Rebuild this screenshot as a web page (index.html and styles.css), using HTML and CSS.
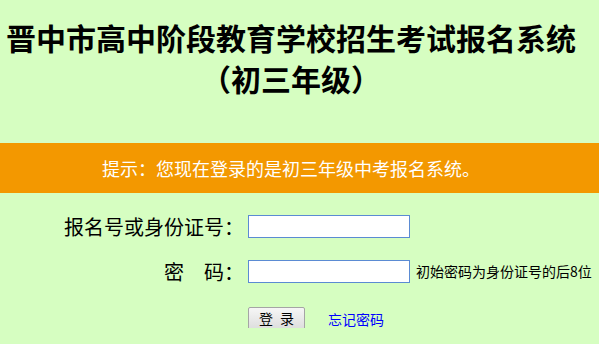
FILE: index.html
```html
<!DOCTYPE html>
<html lang="zh-CN">
<head>
<meta charset="utf-8">
<title>晋中市高中阶段教育学校招生考试报名系统</title>
<link rel="stylesheet" href="styles.css">
</head>
<body>
<div class="page">
  <h1 class="title">晋中市高中阶段教育学校招生考试报名系统<br>（初三年级）</h1>
  <div class="notice">提示：您现在登录的是初三年级中考报名系统。</div>
  <form class="login" onsubmit="return false">
    <label class="lbl" for="uid">报名号或身份证号：</label>
    <input class="field" id="uid" type="text">
    <span></span>
    <label class="lbl" for="pwd">密　码：</label>
    <input class="field" id="pwd" type="password">
    <span class="hint">初始密码为身份证号的后8位</span>
    <span></span>
    <div class="actions">
      <button class="btn" type="submit">登 录</button>
      <a class="forgot" href="#">忘记密码</a>
    </div>
  </form>
</div>
</body>
</html>
```

FILE: styles.css
```css
html, body {
  margin: 0;
  padding: 0;
  background: #d6fec1;
}
body {
  font-family: "Noto Sans CJK SC", "Noto Sans", sans-serif;
  color: #000;
}
.page {
  width: 582px;
}
.title {
  margin: 0;
  padding-top: 17px;
  font-size: 30px;
  line-height: 41px;
  font-weight: bold;
  text-align: center;
}
.notice {
  margin-top: 44px;
  width: 599px;
  height: 50px;
  background: #f39800;
  color: #fff;
  font-size: 18px;
  line-height: 50px;
  text-align: center;
  padding-right: 17px;
  box-sizing: border-box;
}
.login {
  display: grid;
  grid-template-columns: 180px 162px auto;
  grid-auto-rows: 23px;
  column-gap: 4px;
  row-gap: 22px;
  padding-left: 64px;
  margin-top: 22px;
  align-items: center;
}
.lbl {
  font-size: 20px;
  line-height: 23px;
  text-align: right;
  white-space: nowrap;
}
.field {
  box-sizing: border-box;
  width: 162px;
  height: 23px;
  margin: 0;
  border: 1px solid #5b8bd3;
  background: #fff;
  padding: 0 3px;
}
.hint {
  font-size: 14px;
  line-height: 23px;
  margin-left: 2px;
  white-space: nowrap;
}
.actions {
  display: flex;
  align-items: center;
  gap: 23px;
  margin-top: 4px;
  grid-column: 2 / 4;
}
.btn {
  box-sizing: border-box;
  width: 57px;
  height: 23px;
  margin: 0;
  padding: 0;
  border: 1px solid #a5a5a5;
  border-radius: 2px;
  background: linear-gradient(#f6f6f6, #dddddd);
  font-family: "Noto Sans CJK SC", sans-serif;
  font-size: 14px;
  line-height: 21px;
  word-spacing: 4px;
  color: #000;
}
.forgot {
  font-size: 14px;
  color: #0000ff;
  text-decoration: none;
}
```
